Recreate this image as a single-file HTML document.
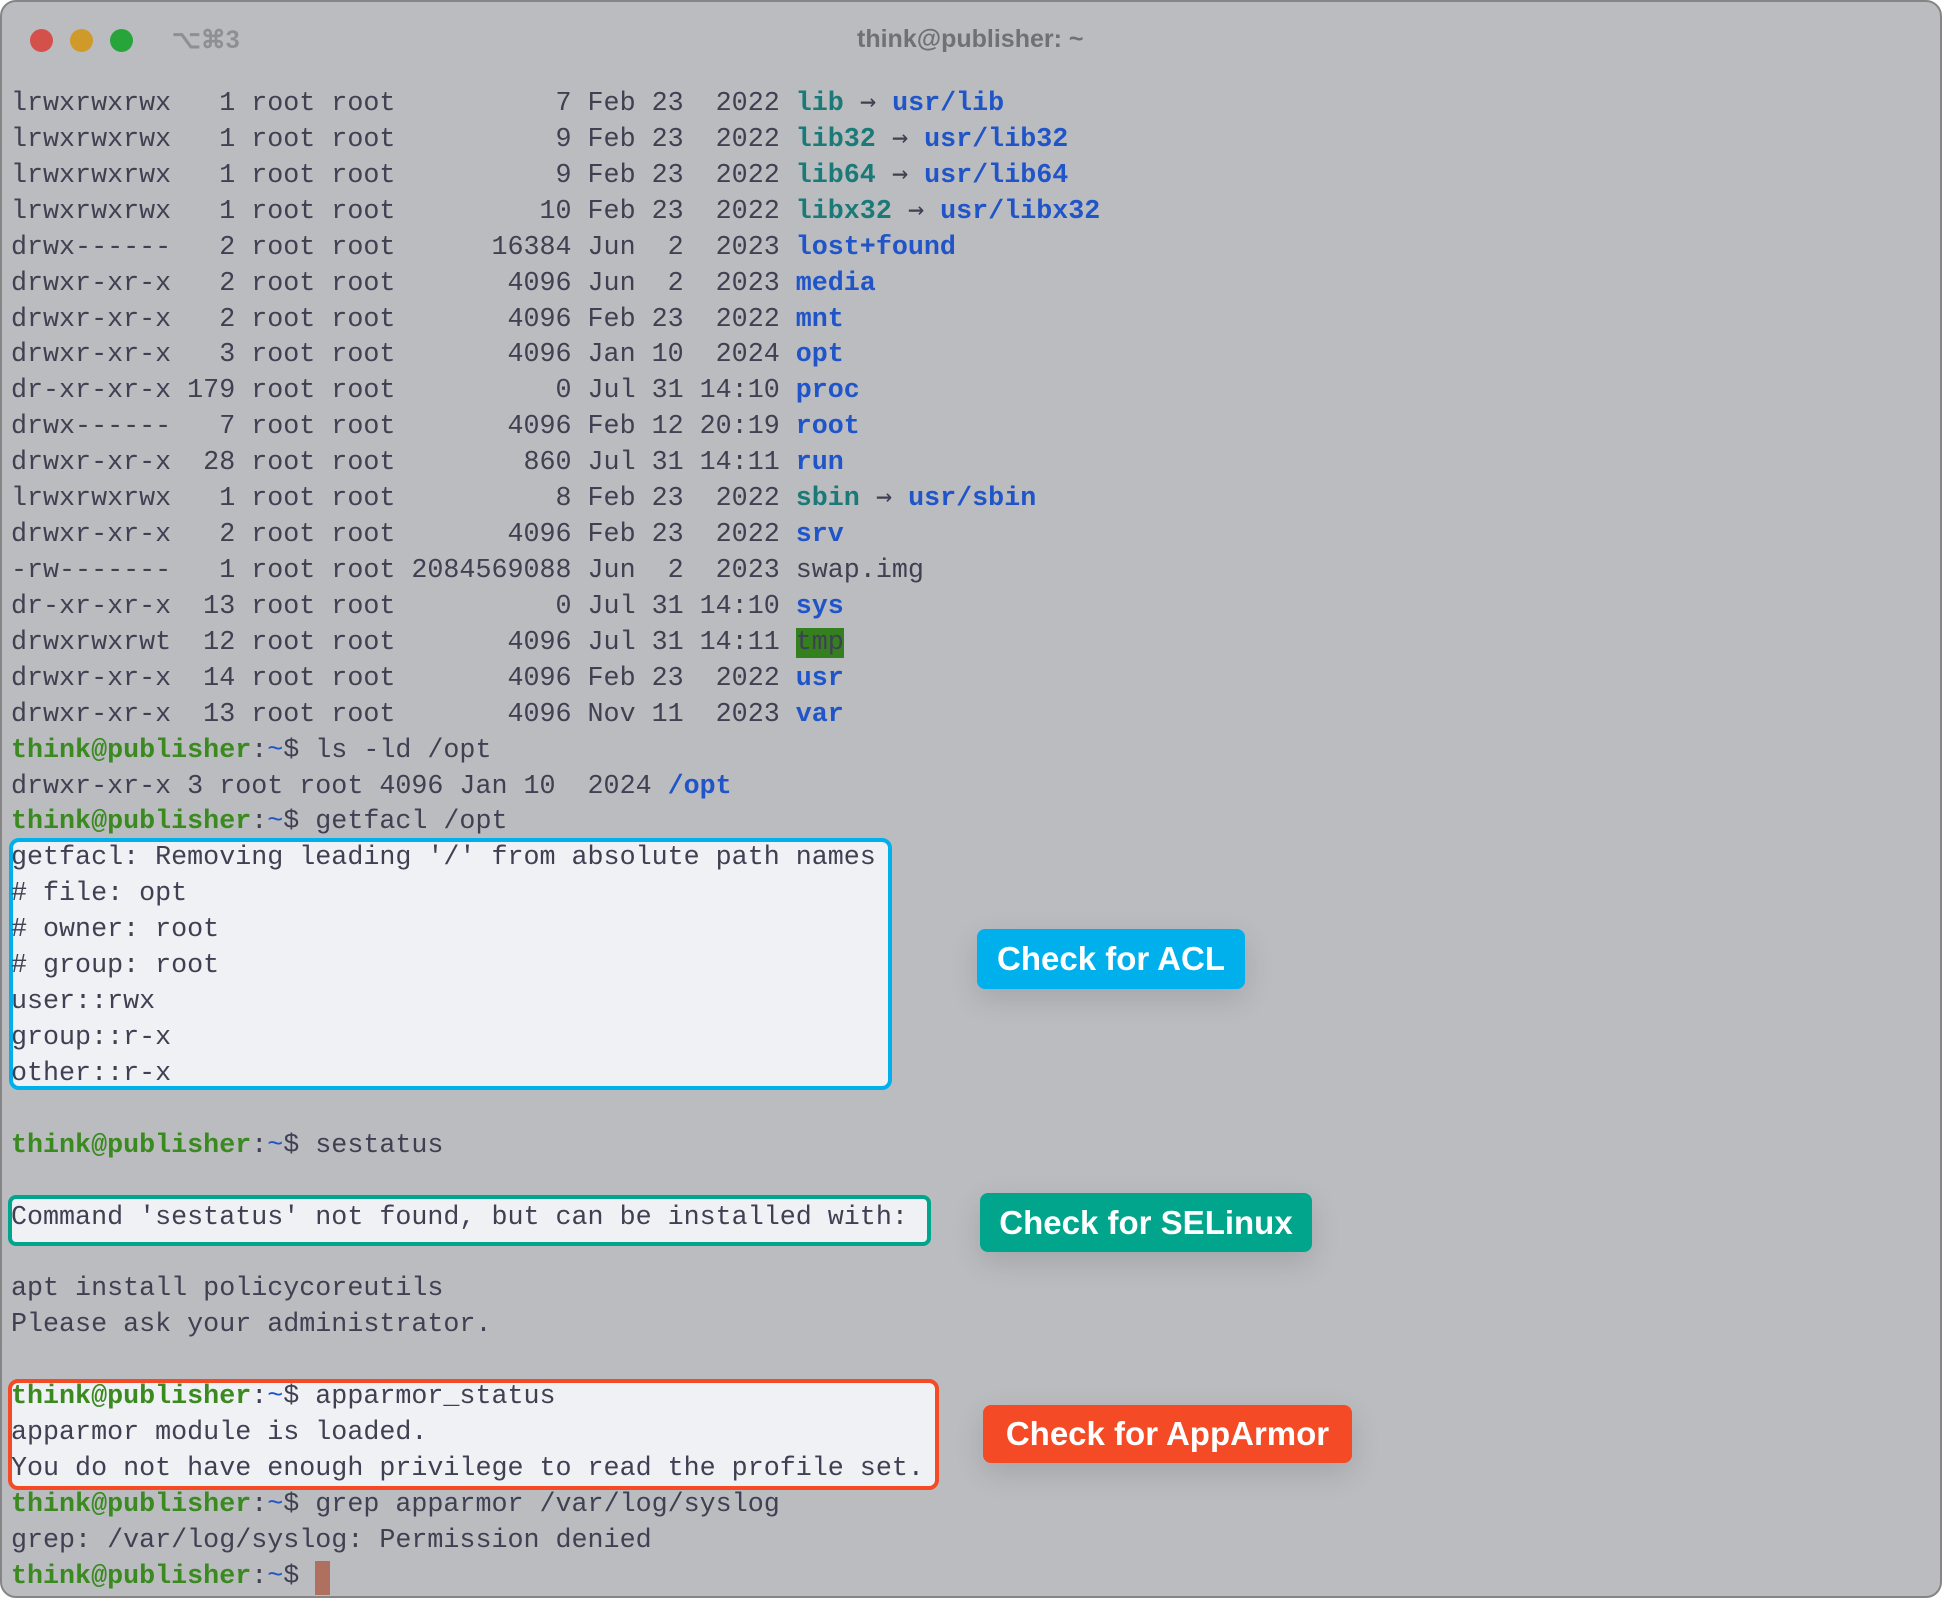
<!DOCTYPE html>
<html><head><meta charset="utf-8"><style>
html,body{margin:0;padding:0;background:#fff;width:1942px;height:1598px;overflow:hidden}
.win{position:absolute;left:0;top:0;width:1938px;height:1594px;background:#bbbcc0;border:2px solid #858585;border-radius:16px;overflow:hidden}
.dot{position:absolute;top:27px;width:23px;height:23px;border-radius:50%}
.tt{position:absolute;top:23px;font-family:"Liberation Sans",sans-serif;font-weight:bold;font-size:25px;color:#707075}
pre{position:absolute;left:9px;top:85px;margin:0;font-family:"Liberation Mono","DejaVu Sans Mono",monospace;font-size:26.7px;line-height:35.92px;color:#3f4152;letter-spacing:0}
.t{color:#1a7a78;font-weight:bold}.b{color:#1f55c8;font-weight:bold}.g{color:#3a8a20;font-weight:bold}.c{color:#1f55c8}
.a{font-family:"DejaVu Sans Mono",monospace;font-size:27px;line-height:0}
.hl{background:#34801f}
.box{position:absolute;background:#f0f1f5;border-radius:10px;box-sizing:border-box}
.lab{position:absolute;color:#fff;font-family:"Liberation Sans",sans-serif;font-weight:bold;font-size:33px;border-radius:8px;display:flex;align-items:center;justify-content:center;box-shadow:0 10px 30px rgba(0,0,0,0.12)}
.cur{display:inline-block;width:15px;height:34px;background:#b07060;vertical-align:top;margin-top:1px}
</style></head><body>
<div class="win">
<div class="dot" style="left:28px;background:#d4504a"></div>
<div class="dot" style="left:68px;background:#d09a2a"></div>
<div class="dot" style="left:108px;background:#27a43a"></div>
<div class="tt" style="left:170px;color:#8e8e93">⌥⌘3</div>
<div class="tt" style="left:855px">think@publisher: ~</div>
<div class="box" style="left:7px;top:836px;width:883px;height:252px;border:4px solid #00b0ec"></div>
<div class="box" style="left:6px;top:1193px;width:923px;height:51px;border:4px solid #00a58c;border-radius:8px"></div>
<div class="box" style="left:6px;top:1377px;width:931px;height:111px;border:4px solid #f44a25"></div>
<pre>lrwxrwxrwx   1 root root          7 Feb 23  2022 <span class="t">lib</span> <span class="a">→</span> <span class="b">usr/lib</span>
lrwxrwxrwx   1 root root          9 Feb 23  2022 <span class="t">lib32</span> <span class="a">→</span> <span class="b">usr/lib32</span>
lrwxrwxrwx   1 root root          9 Feb 23  2022 <span class="t">lib64</span> <span class="a">→</span> <span class="b">usr/lib64</span>
lrwxrwxrwx   1 root root         10 Feb 23  2022 <span class="t">libx32</span> <span class="a">→</span> <span class="b">usr/libx32</span>
drwx------   2 root root      16384 Jun  2  2023 <span class="b">lost+found</span>
drwxr-xr-x   2 root root       4096 Jun  2  2023 <span class="b">media</span>
drwxr-xr-x   2 root root       4096 Feb 23  2022 <span class="b">mnt</span>
drwxr-xr-x   3 root root       4096 Jan 10  2024 <span class="b">opt</span>
dr-xr-xr-x 179 root root          0 Jul 31 14:10 <span class="b">proc</span>
drwx------   7 root root       4096 Feb 12 20:19 <span class="b">root</span>
drwxr-xr-x  28 root root        860 Jul 31 14:11 <span class="b">run</span>
lrwxrwxrwx   1 root root          8 Feb 23  2022 <span class="t">sbin</span> <span class="a">→</span> <span class="b">usr/sbin</span>
drwxr-xr-x   2 root root       4096 Feb 23  2022 <span class="b">srv</span>
-rw-------   1 root root 2084569088 Jun  2  2023 swap.img
dr-xr-xr-x  13 root root          0 Jul 31 14:10 <span class="b">sys</span>
drwxrwxrwt  12 root root       4096 Jul 31 14:11 <span class="hl">tmp</span>
drwxr-xr-x  14 root root       4096 Feb 23  2022 <span class="b">usr</span>
drwxr-xr-x  13 root root       4096 Nov 11  2023 <span class="b">var</span>
<span class="g">think@publisher</span>:<span class="c">~</span>$ ls -ld /opt
drwxr-xr-x 3 root root 4096 Jan 10  2024 <span class="b">/opt</span>
<span class="g">think@publisher</span>:<span class="c">~</span>$ getfacl /opt
getfacl: Removing leading '/' from absolute path names
# file: opt
# owner: root
# group: root
user::rwx
group::r-x
other::r-x

<span class="g">think@publisher</span>:<span class="c">~</span>$ sestatus

Command 'sestatus' not found, but can be installed with:

apt install policycoreutils
Please ask your administrator.

<span class="g">think@publisher</span>:<span class="c">~</span>$ apparmor_status
apparmor module is loaded.
You do not have enough privilege to read the profile set.
<span class="g">think@publisher</span>:<span class="c">~</span>$ grep apparmor /var/log/syslog
grep: /var/log/syslog: Permission denied
<span class="g">think@publisher</span>:<span class="c">~</span>$ <span class="cur"></span></pre>
<div class="lab" style="left:975px;top:927px;width:268px;height:60px;background:#00b0ec">Check for ACL</div>
<div class="lab" style="left:978px;top:1191px;width:332px;height:59px;background:#00a58c">Check for SELinux</div>
<div class="lab" style="left:981px;top:1403px;width:369px;height:58px;background:#f44a25">Check for AppArmor</div>
</div>
</body></html>
